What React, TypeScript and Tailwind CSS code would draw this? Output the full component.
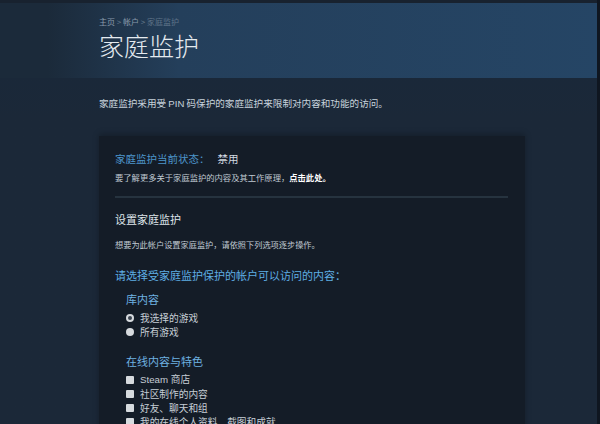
const cjk = { fontFamily: '"Noto Sans CJK SC", "Noto Sans", sans-serif' };
const latin = { fontFamily: '"Liberation Sans", "Noto Sans CJK SC", sans-serif' };

function Radio({ checked, label }: { checked?: boolean; label: string }) {
  return (
    <div className="flex items-center h-[14px]">
      <span className="w-[8px] h-[8px] rounded-full bg-[#d6dade] flex items-center justify-center">
        {checked && <span className="w-[4px] h-[4px] rounded-full bg-[#3b4450]" />}
      </span>
      <span className="ml-[6px] text-[9.7px] leading-[14px] text-[#c6ced6]">{label}</span>
    </div>
  );
}

function Check({ label, latinLabel }: { label: string; latinLabel?: boolean }) {
  return (
    <div className="flex items-center h-[14px]">
      <span className="w-[8px] h-[8px] bg-[#d6dade] rounded-[1px]" />
      <span
        className="ml-[6px] text-[9.7px] leading-[14px] text-[#c6ced6]"
        style={latinLabel ? latin : undefined}
      >
        {label}
      </span>
    </div>
  );
}

export default function App() {
  return (
    <div className="w-[600px] h-[424px] overflow-hidden bg-[#1b2838] flex" style={cjk}>
      <div className="flex-1 flex flex-col min-h-0">
        <div className="shrink-0 h-[78px] border-t-[3px] border-[#18222f] bg-gradient-to-r from-[#1b2a3a] from-[8%] via-[#243f5b] via-[30%] to-[#254565] pl-[99px] pt-[13px]">
          <div className="text-[8px] leading-[12px] text-[#8a9bab]">
            主页 <span className="text-[#6b7d8f]">&gt;</span> 帐户 <span className="text-[#6b7d8f]">&gt;</span>{' '}
            <span className="text-[#5f7388]">家庭监护</span>
          </div>
          <div className="mt-[1px] text-[25px] leading-[32px] font-light text-[#e4eaef]">家庭监护</div>
        </div>
        <div className="bg-gradient-to-b from-[#1a2839] to-[#1b2838] to-[40px] flex-1 min-h-0 pl-[99px]">
          <div className="mt-[18px] text-[9.6px] leading-[14px] text-[#c8d3dc]">
            家庭监护采用受 <span style={latin}>PIN</span> 码保护的家庭监护来限制对内容和功能的访问。
          </div>
          <div className="mt-[25px] w-[426px] h-[400px] bg-[#141c27] shadow-[0_-2px_6px_rgba(0,0,0,0.25)] pl-[16px] pr-[17px] pt-[15px]">
            <div className="text-[10.5px] leading-[16px]">
              <span className="text-[#4d95cb]">家庭监护当前状态：</span>
              <span className="ml-[8px] text-[#d2dae1]">禁用</span>
            </div>
            <div className="mt-[4px] text-[8.3px] leading-[12px] text-[#c0cad3]">
              要了解更多关于家庭监护的内容及其工作原理，<span className="text-white font-bold">点击此处。</span>
            </div>
            <div className="mt-[13px] h-[2px] bg-[#26333f]" />
            <div className="mt-[13px] text-[11px] leading-[16px] text-[#dfe5ea]">设置家庭监护</div>
            <div className="mt-[11px] text-[8.2px] leading-[12px] text-[#c0cad3]">
              想要为此帐户设置家庭监护，请依照下列选项逐步操作。
            </div>
            <div className="mt-[17px] text-[11px] leading-[16px] text-[#5faee4]">
              请选择受家庭监护保护的帐户可以访问的内容：
            </div>
            <div className="pl-[11px]">
              <div className="mt-[8px] text-[11px] leading-[16px] text-[#6fb2e2]">库内容</div>
              <div className="mt-[4px] flex flex-col">
                <Radio checked label="我选择的游戏" />
                <Radio label="所有游戏" />
              </div>
              <div className="mt-[14px] text-[11px] leading-[16px] text-[#6fb2e2]">在线内容与特色</div>
              <div className="mt-[4px] flex flex-col">
                <Check label="Steam 商店" latinLabel />
                <Check label="社区制作的内容" />
                <Check label="好友、聊天和组" />
                <Check label="我的在线个人资料、截图和成就" />
              </div>
            </div>
          </div>
        </div>
      </div>
      <div className="w-[3px] bg-[#0f1620]" />
    </div>
  );
}
